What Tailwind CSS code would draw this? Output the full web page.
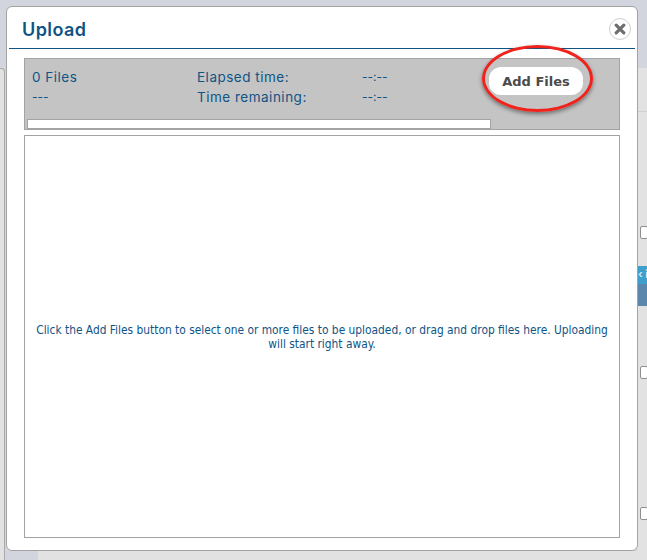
<!DOCTYPE html>
<html>
<head>
<meta charset="utf-8">
<script src="https://cdn.jsdelivr.net/npm/@tailwindcss/browser@4"></script>
</head>
<body class="m-0 overflow-hidden bg-[#d2d5de]">
<div class="relative w-[647px] h-[560px] overflow-hidden bg-[#d2d5de] font-['Inter','Liberation_Sans',sans-serif]">
  <!-- page behind the dialog -->
  <div class="absolute left-0 top-[68px] w-[5px] h-[492px] bg-[#e2e2e2] border-r border-t border-[#a9a9a9] rounded-tr-[4px]"></div>
  <div class="absolute left-[38px] top-[551px] w-[609px] h-[9px] bg-[#e2e2e2]"></div>
  <div class="absolute left-[637px] top-[68px] w-[10px] h-[483px] bg-[#e2e2e2]">
    <div class="absolute left-0 top-[43px] w-[10px] h-px bg-[#cfcfcf]"></div>
    <div class="absolute left-[3px] top-[158px] w-[8px] h-[13px] border border-[#8f8f8f] rounded-[2px] bg-white"></div>
    <div class="absolute left-0 top-[198px] w-[10px] h-[18px] bg-[#3f9fcb] overflow-hidden text-[11px] leading-[16px] font-bold text-[#cfe6f2] whitespace-nowrap pl-px">‹ i</div>
    <div class="absolute left-0 top-[216px] w-[10px] h-[22px] bg-[#5a87ab]"></div>
    <div class="absolute left-[3px] top-[298px] w-[8px] h-[13px] border border-[#8f8f8f] rounded-[2px] bg-white"></div>
    <div class="absolute left-[3px] top-[439px] w-[8px] h-[13px] border border-[#8f8f8f] rounded-[2px] bg-white"></div>
  </div>
  <!-- dialog -->
  <div class="absolute left-[6px] top-[6px] w-[632px] h-[545px] bg-white border border-[#a3a3a3] rounded-[6px] flex flex-col">
    <div class="h-[42px] mx-[2px] border-b border-[#0f5485] flex items-center pl-[13px] pt-[4px] relative">
      <span class="text-[18px] leading-[22px] font-semibold tracking-[0.4px] text-[#0f5485]">Upload</span>
      <div class="absolute right-[4px] top-[11px] w-[22px] h-[22px] rounded-full border border-[#d0d0d0] bg-white flex items-center justify-center">
        <svg width="12" height="12" viewBox="0 0 12 12"><path d="M2.2 2.2 L9.8 9.8 M9.8 2.2 L2.2 9.8" stroke="#6e6e6e" stroke-width="3.2" stroke-linecap="round"/></svg>
      </div>
    </div>
    <div class="ml-[17px] mt-[9px] w-[596px] h-[72px] bg-[#c4c4c4] border border-[#a3a3a3] relative shrink-0">
      <div class="flex pt-[8px] pl-[7px] text-[13.5px] leading-[20px] tracking-[0.5px] text-[#0f5485]">
        <div class="w-[165px]"><div>0 Files</div><div class="tracking-normal text-[12px]">---</div></div>
        <div class="w-[165px]"><div>Elapsed time:</div><div>Time remaining:</div></div>
        <div class="tracking-normal text-[12px]"><div>--:--</div><div>--:--</div></div>
      </div>
      <div class="absolute left-[2px] bottom-0 w-[464px] h-[10px] bg-white border border-[#a3a3a3]"></div>
    </div>
    <div class="ml-[17px] mt-[5px] w-[596px] h-[403px] border border-[#a3a3a3] flex items-center justify-center px-[6px] text-center text-[11.85px] leading-[14px] text-[#0f5485] font-['DejaVu_Sans_Condensed','DejaVu_Sans',sans-serif]">
      <p>Click the Add Files button to select one or more files to be uploaded, or drag and drop files here. Uploading will start right away.</p>
    </div>
  </div>
  <!-- Add Files button with annotation -->
  <div class="absolute left-[489px] top-[67px] w-[94px] h-[28px] pt-[1px] rounded-[12px] bg-white flex items-center justify-center text-[13px] font-bold text-[#4a4a4a] font-['DejaVu_Sans',sans-serif]">Add Files</div>
  <div class="absolute left-[482px] top-[45px] w-[111px] h-[67px] rounded-[50%] border-[3.5px] border-[#f0231c] shadow-[0_2px_4px_rgba(0,0,0,0.45)]"></div>
</div>
</body>
</html>
